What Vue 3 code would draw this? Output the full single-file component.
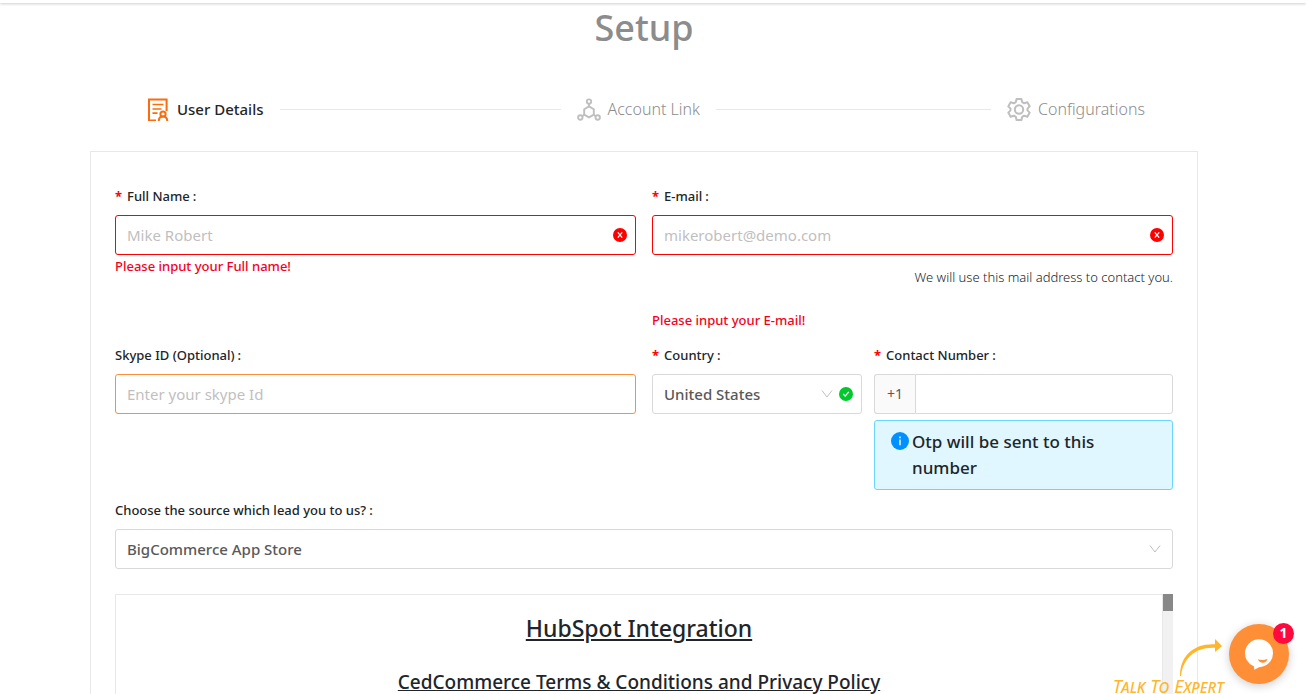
<template>
  <div class="page">
    <div class="topbar"></div>
    <main class="container">
      <h1 class="title">Setup</h1>

      <ol class="steps">
        <li v-for="(step, i) in steps" :key="step.title" class="step" :class="{ active: i === current }">
          <svg v-if="step.icon === 'user'" class="step-icon" viewBox="0 0 24 24" fill="none" stroke="currentColor" stroke-width="2">
            <path d="M10 23.6H3V2.4h17.6V14" />
            <path d="M6.5 7.5h11M6.5 12h9M6.5 16.2h5" stroke-width="1.7" />
            <circle cx="17" cy="17" r="2.6" />
            <path d="M12.7 24c.2-3 2-4.400 4.300-4.400s4.100 1.400 4.300 4.400" />
          </svg>
          <svg v-else-if="step.icon === 'link'" class="step-icon" viewBox="0 0 24 24" fill="none" stroke="currentColor" stroke-width="1.9">
            <path d="M12 9.400l4.800 2.800v5.400L12 20.400l-4.800-2.800v-5.400z" />
            <circle cx="12" cy="4.600" r="2.2" />
            <circle cx="3.3" cy="20.500" r="2.2" />
            <circle cx="20.7" cy="20.500" r="2.2" />
            <path d="M12 6.800v2.800M5.200 19.200l2.200-1.500M18.800 19.200l-2.200-1.500" />
          </svg>
          <svg v-else class="step-icon" viewBox="0 0 24 24" fill="none" stroke="currentColor" stroke-width="2" stroke-linejoin="round">
            <circle cx="12" cy="12.500" r="4.2" />
            <path d="M9.6 1.900h4.800l.8 3.200 2 1.200 3.200-1 2.300 4.100-2.200 2.200v1.800l2.200 2.200-2.300 4.100-3.200-1-2 1.200-.8 3.200H9.600l-.8-3.200-2-1.200-3.200 1-2.300-4.100 2.200-2.200v-1.800L1.300 9.400l2.300-4.100 3.200 1 2-1.200z" />
          </svg>
          <span class="step-title">{{ step.title }}</span>
        </li>
      </ol>

      <form class="card" @submit.prevent>
        <div class="row">
          <div class="field half">
            <label class="label required" for="fullname">Full Name</label>
            <div class="control">
              <input id="fullname" v-model="form.name" class="input error" type="text" placeholder="Mike Robert" />
              <svg class="status" viewBox="0 0 14 14">
                <circle cx="7" cy="7" r="7" fill="#f00" />
                <path d="M4.8 4.4l4.4 5.2M9.2 4.4L4.8 9.6" stroke="#fff" stroke-width="1.2" />
              </svg>
            </div>
            <div class="message">Please input your Full name!</div>
          </div>
          <div class="field half">
            <label class="label required" for="email">E-mail</label>
            <div class="control">
              <input id="email" v-model="form.email" class="input error" type="email" placeholder="mikerobert@demo.com" />
              <svg class="status" viewBox="0 0 14 14">
                <circle cx="7" cy="7" r="7" fill="#f00" />
                <path d="M4.8 4.4l4.4 5.2M9.2 4.4L4.8 9.6" stroke="#fff" stroke-width="1.2" />
              </svg>
            </div>
            <p class="help">We will use this mail address to contact you.</p>
            <div class="message">Please input your E-mail!</div>
          </div>
        </div>

        <div class="row">
          <div class="field half">
            <label class="label" for="skype">Skype ID (Optional)</label>
            <input id="skype" v-model="form.skype" class="input focused" type="text" placeholder="Enter your skype Id" />
          </div>
          <div class="half split">
            <div class="field country">
              <label class="label required" for="country">Country</label>
              <div class="control">
                <select id="country" v-model="form.country" class="input">
                  <option>United States</option>
                </select>
                <svg class="chevron beside" viewBox="0 0 12 12" fill="none" stroke="#bfbfbf">
                  <path d="M1 2.5l5 6.5 5-6.5" />
                </svg>
                <svg class="status" viewBox="0 0 14 14">
                  <circle cx="7" cy="7" r="7" fill="#00c92c" />
                  <path d="M4.2 7l2 2.2 3.6-4.4" fill="none" stroke="#fff" stroke-width="1.2" />
                </svg>
              </div>
            </div>
            <div class="field contact">
              <label class="label required" for="phone">Contact Number</label>
              <div class="phone">
                <span class="prefix">+1</span>
                <input id="phone" v-model="form.phone" class="input" type="tel" />
              </div>
              <div class="alert">
                <svg class="alert-icon" viewBox="0 0 18 18">
                  <circle cx="9" cy="9" r="9" fill="#0091ff" />
                  <path d="M9 7.6v5.6M9 4.6v1.6" stroke="#fff" stroke-width="1.4" />
                </svg>
                <span>Otp will be sent to this number</span>
              </div>
            </div>
          </div>
        </div>

        <div class="field">
          <label class="label" for="source">Choose the source which lead you to us?</label>
          <div class="control">
            <select id="source" v-model="form.source" class="input">
              <option>BigCommerce App Store</option>
            </select>
            <svg class="chevron" viewBox="0 0 12 12" fill="none" stroke="#bfbfbf">
              <path d="M1 2.5l5 6.5 5-6.5" />
            </svg>
          </div>
        </div>

        <section class="terms">
          <div class="terms-body">
            <h2>HubSpot Integration</h2>
            <h3>CedCommerce Terms &amp; Conditions and Privacy Policy</h3>
          </div>
          <div class="track"><div class="thumb"></div></div>
        </section>
      </form>
    </main>

    <div class="expert">
      <svg class="expert-arrow" viewBox="0 0 46 40">
        <path d="M2 37C2 18 14 4.500 37 5.200V8.800C18 7.500 5 19 3 37z" fill="#ffb629" />
        <path d="M37 0l7 7-7 6z" fill="#ffb629" />
      </svg>
      <span class="expert-text">Talk To Expert</span>
    </div>
    <button class="chat" type="button" aria-label="Chat">
      <svg viewBox="0 0 60 60">
        <path d="M30 15.200a14 14 0 0 1 0 28l-4.600 2.600-.6-3.600A14 14 0 0 1 30 15.200z" fill="#fff" />
        <path d="M28.800 35.200c3 1 6.500 1 9.600-.2-1.200 5-7.500 5-9.600.2z" fill="#ff8f37" />
      </svg>
      <span class="badge">1</span>
    </button>
  </div>
</template>

<script setup>
import { reactive, ref } from 'vue'

const current = ref(0)

const steps = [
  { title: 'User Details', icon: 'user' },
  { title: 'Account Link', icon: 'link' },
  { title: 'Configurations', icon: 'gear' }
]

const form = reactive({
  name: '',
  email: '',
  skype: '',
  country: 'United States',
  phone: '',
  source: 'BigCommerce App Store'
})
</script>

<style>
body {
  margin: 0;
  background: #fff;
}
</style>

<style scoped>
.page {
  position: relative;
  height: 100vh;
  overflow: hidden;
  font-family: "Noto Sans", "Open Sans", sans-serif;
  font-size: 14px;
  line-height: 22px;
  color: #212529;
}

.page * {
  box-sizing: border-box;
}

.topbar {
  height: 3px;
  box-shadow: 0 1px 3px rgba(0, 0, 0, 0.2);
}

.container {
  margin-right: 18px;
  padding: 0 90px;
}

.title {
  margin: 0 0 42px;
  font-size: 36px;
  font-weight: 500;
  line-height: 50px;
  text-align: center;
  color: #8c8c8c;
}

.steps {
  display: flex;
  gap: 16px;
  margin: 0 0 28px;
  padding: 0 55px 0 56px;
  list-style: none;
}

.step {
  display: flex;
  align-items: center;
  flex: 1;
  height: 28px;
  color: #bfbfbf;
}

.step:last-child {
  flex: 0 0 136px;
  min-width: 0;
}

.step:not(:last-child)::after {
  content: "";
  flex: 1;
  height: 1px;
  margin-left: 16px;
  background: #e8e8e8;
}

.step-icon {
  flex: none;
  width: 24px;
  height: 24px;
  margin-right: 7px;
}

.step-title {
  font-size: 16px;
  font-weight: 300;
  white-space: nowrap;
  color: #8c8c8c;
}

.step.active {
  color: #fa6c0c;
}

.step.active .step-title {
  font-size: 15px;
  font-weight: 500;
  color: #262626;
}

.card {
  padding: 33px 24px 24px;
  border: 1px solid #e8e8e8;
}

.row {
  display: flex;
  gap: 16px;
  margin-bottom: 9px;
}

.half {
  flex: 1;
  min-width: 0;
}

.split {
  display: flex;
  gap: 12px;
}

.country {
  flex: 210;
  min-width: 0;
}

.contact {
  flex: 299;
  min-width: 0;
}

.label {
  display: block;
  margin-bottom: 8px;
  font-size: 13px;
  font-weight: 500;
}

.label::after {
  content: ":";
  margin-left: 3px;
}

.label.required::before {
  content: "*";
  margin-right: 5px;
  font-weight: 700;
  color: #f00;
}

.control {
  position: relative;
}

.input {
  display: block;
  width: 100%;
  height: 40px;
  margin: 0;
  padding: 0 11px;
  border: 1px solid #d9d9d9;
  border-radius: 3px;
  outline: none;
  background: #fff;
  font-family: inherit;
  font-size: 15px;
  color: #595959;
  appearance: none;
}

.input::placeholder {
  color: #bfbfbf;
  opacity: 1;
}

select.input {
  font-weight: 500;
}

.input.error {
  border-color: #f00;
}

.input.focused {
  border-color: #ff8f37;
}

.status {
  position: absolute;
  top: 13px;
  right: 9px;
  width: 14px;
  height: 14px;
}

.chevron {
  position: absolute;
  top: 14px;
  right: 12px;
  width: 12px;
  height: 12px;
}

.chevron.beside {
  right: 29px;
}

.message {
  font-size: 13px;
  font-weight: 500;
  color: #f5001d;
}

.help {
  margin: 11px 0 21px;
  font-size: 13px;
  font-weight: 300;
  text-align: right;
}

.help + .message {
  margin-bottom: 4px;
}

.phone {
  display: flex;
}

.prefix {
  display: flex;
  align-items: center;
  justify-content: center;
  flex: none;
  width: 41px;
  border: 1px solid #d9d9d9;
  border-right: 0;
  border-radius: 3px 0 0 3px;
  background: #fafafa;
  color: #595959;
}

.phone .input {
  flex: 1;
  min-width: 0;
  border-radius: 0 3px 3px 0;
}

.alert {
  display: flex;
  gap: 3px;
  margin-top: 6px;
  padding: 8px 60px 8px 16px;
  border: 1px solid #6bd5ff;
  border-radius: 3px;
  background: #e0f7ff;
  font-size: 17px;
  font-weight: 500;
  line-height: 26px;
}

.alert-icon {
  flex: none;
  width: 18px;
  height: 18px;
  margin-top: 3px;
}

.terms {
  display: flex;
  height: 300px;
  margin-top: 25px;
}

.terms-body {
  flex: 1;
  padding: 16px 0;
  border: 1px solid #e8e8e8;
  text-align: center;
  text-decoration: underline;
}

.terms h2 {
  margin: 0 0 23px;
  font-size: 23px;
  font-weight: 500;
  line-height: 34px;
}

.terms h3 {
  margin: 0;
  font-size: 19px;
  font-weight: 500;
  line-height: 28px;
}

.track {
  width: 10px;
  background: #f1f1f1;
}

.thumb {
  height: 17px;
  background: #888;
}

.expert {
  position: absolute;
  right: 82px;
  bottom: 0;
  display: flex;
  flex-direction: column;
  align-items: flex-end;
  color: #ffb629;
}

.expert-arrow {
  width: 46px;
  height: 40px;
}

.expert-text {
  font-size: 18px;
  font-style: italic;
  font-variant: small-caps;
  line-height: 15px;
  white-space: nowrap;
}

.chat {
  position: absolute;
  right: 17px;
  bottom: 10px;
  width: 60px;
  height: 60px;
  padding: 0;
  border: 0;
  border-radius: 50%;
  background: #ff8f37;
  box-shadow: 0 2px 10px rgba(0, 0, 0, 0.2);
  cursor: pointer;
}

.chat svg {
  display: block;
}

.badge {
  position: absolute;
  top: -1px;
  right: -5px;
  width: 21px;
  height: 21px;
  border-radius: 50%;
  background: #ff0a3c;
  font-family: "Open Sans", sans-serif;
  font-size: 14px;
  font-weight: 700;
  line-height: 20px;
  text-align: center;
  color: #fff;
}
</style>
